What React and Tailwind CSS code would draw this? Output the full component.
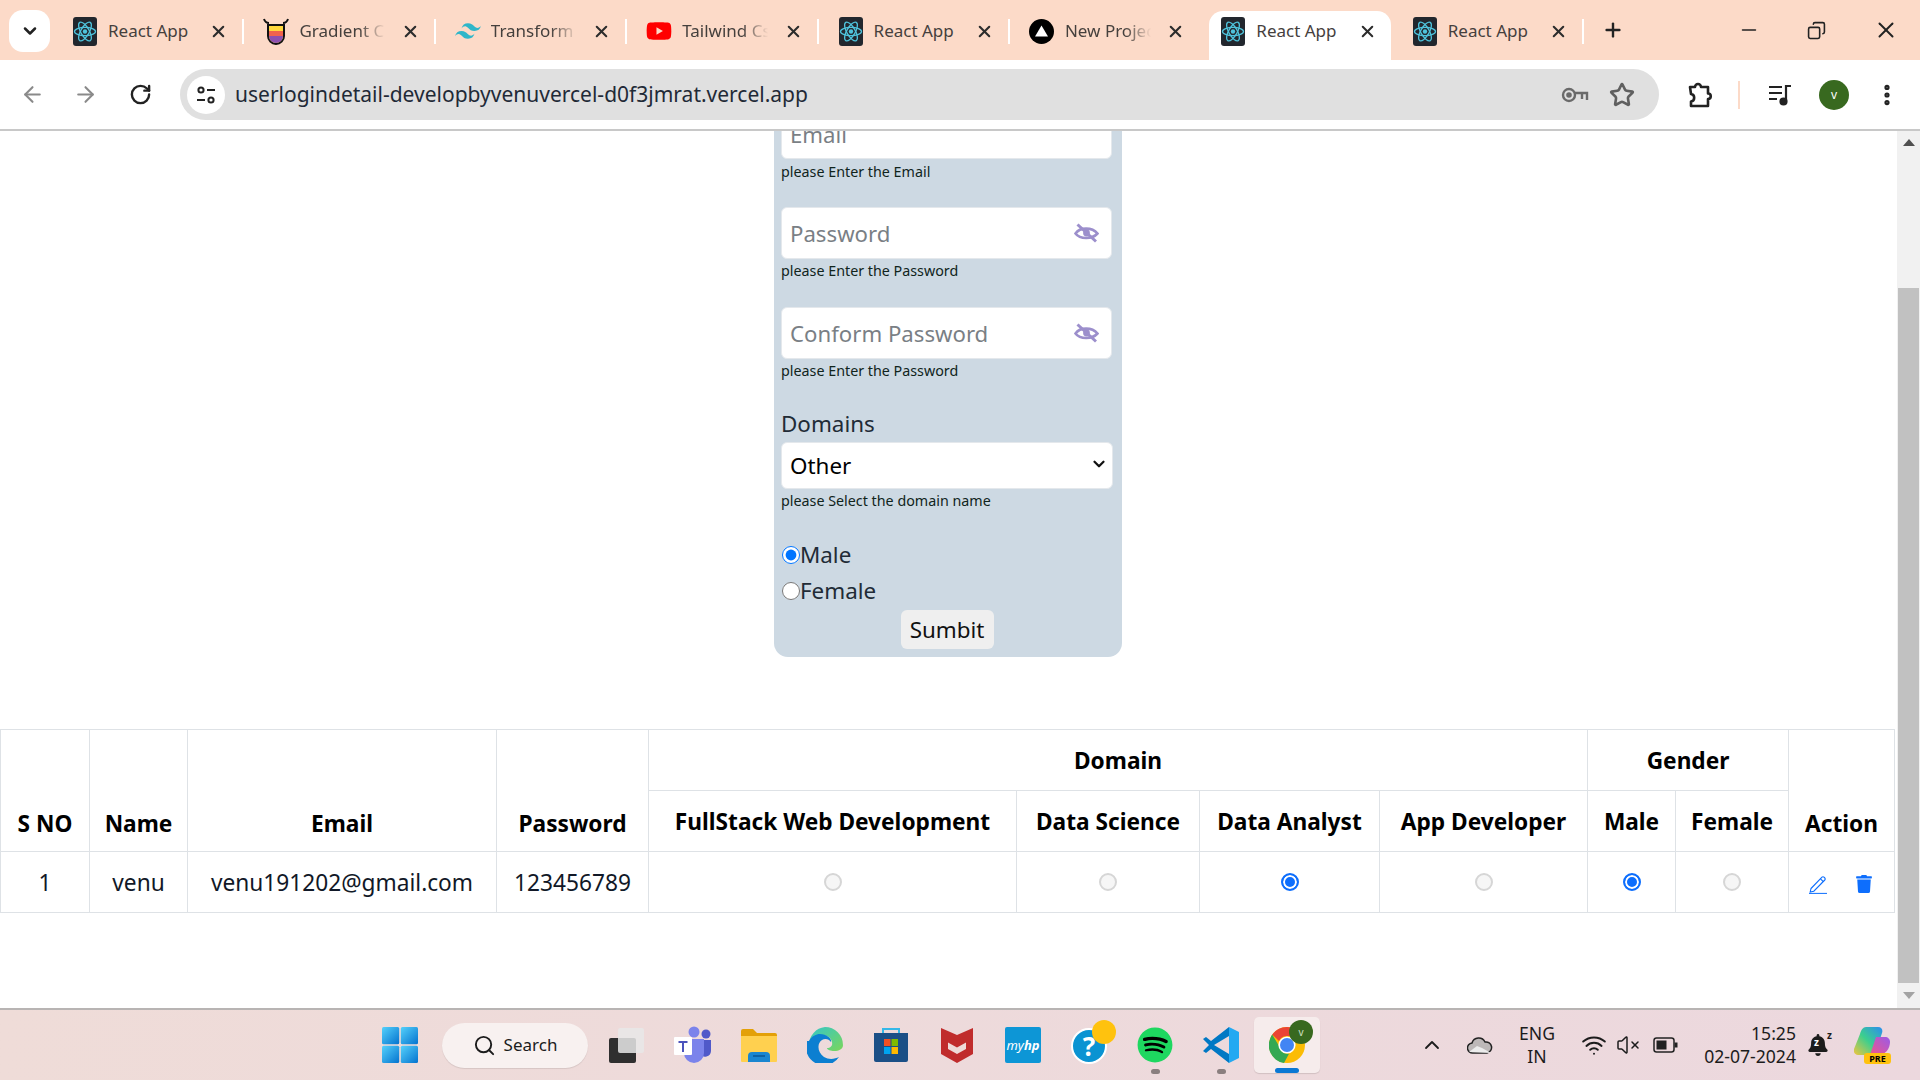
import React from "react";
import {
  ArrowLeft,
  ArrowRight,
  RotateCw,
  ChevronDown,
  ChevronUp,
  X,
  Plus,
  Minus,
  Copy,
  Star,
  EllipsisVertical,
  Search,
  Wifi,
  VolumeX,
} from "lucide-react";
import { FaSpotify, FaTrash, FaYoutube, FaBell } from "react-icons/fa";
import { SiTailwindcss } from "react-icons/si";

const FONT = "font-['Noto_Sans','Open_Sans',sans-serif]";

const ReactLogo = () => (
  <svg width="24" height="29" viewBox="0 0 24 29">
    <rect width="24" height="29" rx="3" fill="#22272e" />
    <g fill="none" stroke="#4fc3dc" strokeWidth="1.3">
      <ellipse cx="12" cy="14.5" rx="10.5" ry="4.2" />
      <ellipse cx="12" cy="14.5" rx="10.5" ry="4.2" transform="rotate(60 12 14.5)" />
      <ellipse cx="12" cy="14.5" rx="10.5" ry="4.2" transform="rotate(120 12 14.5)" />
    </g>
    <circle cx="12" cy="14.5" r="2.2" fill="#4fc3dc" />
  </svg>
);

const GradientLogo = () => (
  <svg width="26" height="30" viewBox="0 0 26 30">
    <path d="M5 9h16v11a8 8 0 0 1-16 0z" fill="#ffd83d" stroke="#111" strokeWidth="2" />
    <path d="M6 15h14v5H6z" fill="#f0624d" />
    <path d="M6 20h14a7 7 0 0 1-14 0z" fill="#8c4fb0" />
    <path d="M1 3c1 3 3 4 5 4M25 3c-1 3-3 4-5 4" stroke="#111" strokeWidth="2" fill="none" />
  </svg>
);

const VercelLogo = () => (
  <svg width="25" height="25" viewBox="0 0 25 25">
    <circle cx="12.5" cy="12.5" r="12.5" fill="#000" />
    <path d="M12.5 6.5l6.5 11H6z" fill="#fff" />
  </svg>
);

const YoutubeLogo = () => <FaYoutube className="text-[28px] text-[#f00]" />;
const TailwindLogo = () => <SiTailwindcss className="text-[26px] text-[#2fb6c9]" />;

const tabs = [
  { title: "React App", logo: <ReactLogo /> },
  { title: "Gradient Colors", logo: <GradientLogo />, fade: true },
  { title: "Transform - Tailwind", logo: <TailwindLogo />, fade: true },
  { title: "Tailwind Css", logo: <YoutubeLogo />, fade: true },
  { title: "React App", logo: <ReactLogo /> },
  { title: "New Project", logo: <VercelLogo />, fade: true },
  { title: "React App", logo: <ReactLogo />, active: true },
  { title: "React App", logo: <ReactLogo /> },
];

const Tab = ({ title, logo, fade, active, noSep }) => (
  <div className="relative flex items-center w-[191.4px] h-[49px] mt-[11px] pl-[13px] pr-[22px] pb-[9px]">
    {active && <div className="absolute inset-y-0 left-[2px] right-[8px] bg-white rounded-t-[14px]" />}
    <div className="relative flex justify-center items-center w-[26px] shrink-0">{logo}</div>
    <div
      className={`relative ml-[10px] w-[88px] overflow-hidden whitespace-nowrap text-[17px] text-[#45403d] ${
        fade ? "[mask-image:linear-gradient(to_right,black_68%,transparent_98%)]" : ""
      }`}
    >
      {title}
    </div>
    <X size={19} strokeWidth={2.6} className="relative ml-auto text-[#2c2c2c]" />
    {!active && !noSep && <div className="absolute right-[6px] top-[8px] w-[2px] h-[25px] bg-white" />}
  </div>
);

const TabStrip = () => (
  <div className="flex h-[60px] bg-[#fcdac8] pl-[9px]">
    <div className="flex items-center justify-center w-[41px] h-[42px] mt-[10px] bg-white rounded-[14px]">
      <ChevronDown size={20} strokeWidth={3} className="text-[#222]" />
    </div>
    <div className="flex ml-[9px]">
      {tabs.map((t, i) => (
        <Tab key={i} {...t} noSep={i === 5} />
      ))}
    </div>
    <div className="flex items-center ml-[12px]">
      <Plus size={22} strokeWidth={2.6} className="text-[#222]" />
    </div>
    <div className="flex items-center ml-auto text-[#222]">
      <div className="w-[62px] flex justify-center"><Minus size={22} strokeWidth={1.8} /></div>
      <div className="w-[72px] flex justify-center"><Copy size={19} strokeWidth={2} className="-scale-x-100" /></div>
      <div className="w-[68px] flex justify-center"><X size={26} strokeWidth={1.8} /></div>
    </div>
  </div>
);

const KeyIcon = () => (
  <svg width="28" height="18" viewBox="0 0 28 18" fill="none" stroke="#6a6a6a" strokeWidth="2.4">
    <circle cx="8" cy="9" r="6" />
    <circle cx="8" cy="9" r="1.6" fill="#6a6a6a" />
    <path d="M14 7h12v7M21 8v5" />
  </svg>
);

const MediaIcon = () => (
  <svg width="24" height="22" viewBox="0 0 24 22" fill="none" stroke="#222" strokeWidth="2.2">
    <path d="M1 3h13M1 9h13M1 15h8" />
    <path d="M18 17V2h5" />
    <circle cx="15.5" cy="17.5" r="3" fill="#222" />
  </svg>
);

const SiteIcon = () => (
  <svg width="20" height="20" viewBox="0 0 20 20" fill="none" stroke="#222" strokeWidth="2">
    <circle cx="5" cy="5" r="2.6" />
    <path d="M11 5h8M1 15h8" />
    <circle cx="15" cy="15" r="2.6" />
  </svg>
);

const PuzzleIcon = () => (
  <svg width="28" height="28" viewBox="0 0 28 28" fill="none" stroke="#222" strokeWidth="2.6" strokeLinejoin="round">
    <path d="M4 6h5a3 3 0 0 1 6 0h7v6.5a2.6 2.6 0 0 1 0 5.5v7H5v-4.5a3.8 3.8 0 0 0 0-7.5z" />
  </svg>
);

const EyeOff = () => (
  <svg width="25" height="20" viewBox="0 0 25 20" fill="none" stroke="#9c8fcc" strokeWidth="2.6" className="ml-auto">
    <path d="M1.5 10.5C6 4 18 4 23.5 10.5C18 16.5 6 16.5 1.5 10.5z" />
    <circle cx="12.5" cy="10" r="3.4" fill="#9c8fcc" stroke="none" />
    <path d="M3.5 1.5 22 18.5" strokeWidth="3" />
  </svg>
);

const Toolbar = () => (
  <div className="flex items-center h-[71px] bg-white border-b-2 border-[#c8c8c8]">
    <div className="flex w-[180px] pl-[20px] items-center">
      <ArrowLeft size={25} strokeWidth={2} className="text-[#8a8a8a]" />
      <ArrowRight size={25} strokeWidth={2} className="text-[#8a8a8a] ml-[28px]" />
      <RotateCw size={23} strokeWidth={2.5} className="text-[#222] ml-[31px]" />
    </div>
    <div className="flex items-center w-[1479px] h-[51px] bg-[#e0e0e0] rounded-full pl-[7px] pr-[24px]">
      <div className="flex items-center justify-center w-[38px] h-[38px] bg-white rounded-full">
        <SiteIcon />
      </div>
      <span className="ml-[10px] text-[21px] text-[#1f2a37]">userlogindetail-developbyvenuvercel-d0f3jmrat.vercel.app</span>
      <div className="ml-auto flex items-center gap-[20px]">
        <KeyIcon />
        <Star size={26} strokeWidth={2.4} className="text-[#5f5f5f]" />
      </div>
    </div>
    <div className="flex items-center ml-[27px]">
      <PuzzleIcon />
      <div className="w-[2px] h-[28px] bg-[#fcdac8] ml-[24px]" />
      <div className="ml-[28px]"><MediaIcon /></div>
      <div className="flex items-center justify-center w-[30px] h-[30px] ml-[27px] rounded-full bg-[#38691f] text-white text-[12px]">v</div>
      <EllipsisVertical size={26} strokeWidth={2.8} className="text-[#222] ml-[25px]" />
    </div>
  </div>
);

const Help = ({ children }) => (
  <p className="mt-[2px] text-[14.3px] leading-[20px] text-[#10241c]">{children}</p>
);

const PasswordField = ({ placeholder }) => (
  <div className="flex items-center h-[52px] w-[331px] bg-white rounded-[6px] border border-[#e4e8ec] pl-[8px] pr-[12px]">
    <span className="pt-[1px] text-[22.2px] text-[#7a7f85]">{placeholder}</span>
    <EyeOff />
  </div>
);

const RegisterForm = () => (
  <div className="w-[348px] h-[526px] overflow-hidden bg-[#cdd9e3] rounded-b-[14px] pl-[7px] pr-[9px]">
    <div className="-mt-[24px]">
      <div className="flex items-center h-[52px] w-[331px] bg-white rounded-[6px] border border-[#e4e8ec] pl-[8px]">
        <span className="pt-[3px] text-[22.2px] text-[#7a7f85]">Email</span>
      </div>
      <div className="pt-[1px]">
        <Help>please Enter the Email</Help>
      </div>
      <div className="mt-[25px]">
        <PasswordField placeholder="Password" />
      </div>
      <Help>please Enter the Password</Help>
      <div className="mt-[26px]">
        <PasswordField placeholder="Conform Password" />
      </div>
      <Help>please Enter the Password</Help>
      <p className="mt-[25px] text-[22.4px] leading-[36px] text-[#212b36]">Domains</p>
      <div className="relative w-[332px]">
        <select
          defaultValue="Other"
          className="block appearance-none w-full h-[47px] bg-white rounded-[6px] border border-[#e4e8ec] pl-[8px] text-[22.4px] text-black"
        >
          <option>Other</option>
        </select>
        <ChevronDown size={18} strokeWidth={3} className="absolute right-[5px] top-[13px] text-[#111]" />
      </div>
      <Help>please Select the domain name</Help>
      <label className="flex items-center mt-[26px] h-[36px] text-[22.4px] text-[#212b36]">
        <input type="radio" name="gender" defaultChecked className="ml-[1px] w-[18px] h-[18px] accent-[#0075ff]" />
        <span>Male</span>
      </label>
      <label className="flex items-center h-[36px] text-[22.4px] text-[#212b36]">
        <input type="radio" name="gender" className="ml-[1px] w-[18px] h-[18px]" />
        <span>Female</span>
      </label>
      <div className="flex justify-center mt-[1px]">
        <button className="w-[93px] h-[39px] bg-[#efefef] rounded-[6px] text-[22.4px] text-[#111]">Sumbit</button>
      </div>
    </div>
  </div>
);

const TableRadio = ({ checked }) => (
  <input
    type="radio"
    readOnly
    checked={!!checked}
    className="inline-block align-middle -mt-[3px] appearance-none w-[18px] h-[18px] rounded-full border-2 border-[#d6d6d6] bg-[#f6f6f6] checked:border-[#0d6efd] checked:bg-[#0d6efd] checked:shadow-[inset_0_0_0_2px_white]"
  />
);

const th = "border border-[#dee2e6] px-2 text-center font-bold text-[22.7px] text-black";
const td = "border border-[#dee2e6] px-2 text-center text-[22.7px] text-[#111827]";

const EditIcon = () => (
  <svg width="20" height="20" viewBox="0 0 20 20" fill="none" stroke="#0d6efd" strokeWidth="1.1">
    <path d="M3 14.5 14 3.2a1.4 1.4 0 0 1 2 0l.8.8a1.4 1.4 0 0 1 0 2L5.8 17.2l-3.6.8z" />
    <path d="M12.5 4.8l2.8 2.8" />
    <path d="M1 19.4h18" strokeWidth="1" />
  </svg>
);

const UserTable = () => (
  <table className="table-fixed border-collapse w-[1894px]">
    <colgroup>
      <col className="w-[89px]" />
      <col className="w-[98px]" />
      <col className="w-[309px]" />
      <col className="w-[152px]" />
      <col className="w-[368px]" />
      <col className="w-[183px]" />
      <col className="w-[180px]" />
      <col className="w-[208px]" />
      <col className="w-[88px]" />
      <col className="w-[113px]" />
      <col className="w-[106px]" />
    </colgroup>
    <thead>
      <tr className="h-[61px]">
        <th rowSpan={2} className={`${th} align-bottom pb-[10px]`}>S NO</th>
        <th rowSpan={2} className={`${th} align-bottom pb-[10px]`}>Name</th>
        <th rowSpan={2} className={`${th} align-bottom pb-[10px]`}>Email</th>
        <th rowSpan={2} className={`${th} align-bottom pb-[10px]`}>Password</th>
        <th colSpan={4} className={`${th} pt-[2px]`}>Domain</th>
        <th colSpan={2} className={`${th} pt-[2px]`}>Gender</th>
        <th rowSpan={2} className={`${th} align-bottom pb-[10px]`}>Action</th>
      </tr>
      <tr className="h-[61px]">
        <th className={`${th} pt-[3px]`}>FullStack Web Development</th>
        <th className={`${th} pt-[3px]`}>Data Science</th>
        <th className={`${th} pt-[3px]`}>Data Analyst</th>
        <th className={`${th} pt-[3px]`}>App Developer</th>
        <th className={`${th} pt-[3px]`}>Male</th>
        <th className={`${th} pt-[3px]`}>Female</th>
      </tr>
    </thead>
    <tbody>
      <tr className="h-[61px]">
        <td className={`${td} pt-[2px]`}>1</td>
        <td className={`${td} pt-[2px]`}>venu</td>
        <td className={`${td} pt-[2px]`}>venu191202@gmail.com</td>
        <td className={`${td} pt-[2px]`}>123456789</td>
        <td className={td}><TableRadio /></td>
        <td className={td}><TableRadio /></td>
        <td className={td}><TableRadio checked /></td>
        <td className={td}><TableRadio /></td>
        <td className={td}><TableRadio checked /></td>
        <td className={td}><TableRadio /></td>
        <td className={td}>
          <div className="flex items-center justify-center gap-[27px] pt-[4px] pr-[3px]">
            <EditIcon />
            <FaTrash className="text-[18px] text-[#0d6efd]" />
          </div>
        </td>
      </tr>
    </tbody>
  </table>
);

const Scrollbar = () => (
  <div className="flex flex-col w-[23px] bg-[#f1f1f1] items-center">
    <div className="h-[157px] w-full flex justify-center pt-[8px]">
      <div className="w-0 h-0 border-x-[6px] border-x-transparent border-b-[7px] border-b-[#505050]" />
    </div>
    <div className="w-[21px] h-[695px] bg-[#c1c1c1]" />
    <div className="flex-1 w-full flex justify-center items-center">
      <div className="w-0 h-0 border-x-[6px] border-x-transparent border-t-[7px] border-t-[#a3a3a3]" />
    </div>
  </div>
);

const WinLogo = () => (
  <svg width="36" height="36" viewBox="0 0 36 36">
    <defs>
      <linearGradient id="win" x1="0" y1="0" x2="1" y2="1">
        <stop offset="0" stopColor="#55d1fb" />
        <stop offset="1" stopColor="#0473cf" />
      </linearGradient>
    </defs>
    <rect x="0" y="0" width="17.2" height="17.2" rx="1.5" fill="url(#win)" />
    <rect x="18.8" y="0" width="17.2" height="17.2" rx="1.5" fill="url(#win)" />
    <rect x="0" y="18.8" width="17.2" height="17.2" rx="1.5" fill="url(#win)" />
    <rect x="18.8" y="18.8" width="17.2" height="17.2" rx="1.5" fill="url(#win)" />
  </svg>
);

const TaskView = () => (
  <svg width="36" height="36" viewBox="0 0 36 36">
    <rect x="0" y="11" width="27" height="25" rx="2" fill="#2f2f2f" />
    <rect x="9" y="1" width="26" height="25" rx="2" fill="#e8e8e8" fillOpacity="0.85" />
  </svg>
);

const Teams = () => (
  <svg width="38" height="38" viewBox="0 0 38 38">
    <circle cx="32" cy="8" r="4.5" fill="#5059c9" />
    <path d="M26 14h11v11a6 6 0 0 1-11 3z" fill="#5059c9" />
    <circle cx="20" cy="6" r="5.5" fill="#7b83eb" />
    <path d="M10 13h20v14a10 10 0 0 1-20 0z" fill="#7b83eb" />
    <rect x="0" y="11" width="18" height="18" rx="1" fill="#fff" />
    <path d="M4.5 15h9v2H10v9H8v-9H4.5z" fill="#4b53bc" />
  </svg>
);

const Folder = () => (
  <svg width="36" height="34" viewBox="0 0 36 34">
    <path d="M0 3a2 2 0 0 1 2-2h10l4 4h18a2 2 0 0 1 2 2v4H0z" fill="#e3a008" />
    <path d="M0 8h36v25a1 1 0 0 1-1 1H1a1 1 0 0 1-1-1z" fill="#ffd04f" />
    <path d="M7 34v-6a4 4 0 0 1 4-4h14a4 4 0 0 1 4 4v6z" fill="#1a86d0" />
    <path d="M12 28h12" stroke="#0b5a99" strokeWidth="1.6" />
  </svg>
);

const Edge = () => (
  <svg width="36" height="36" viewBox="0 0 36 36">
    <defs>
      <linearGradient id="edge" x1="0" y1="0" x2="1" y2="1">
        <stop offset="0" stopColor="#33c6c9" />
        <stop offset="1" stopColor="#7bd65a" />
      </linearGradient>
    </defs>
    <path d="M18 0a18 18 0 0 1 18 18c0 4-4 6-9 6-3 0-7-1-7-3 3 0 6-2 5-6-1-5-7-8-13-6-4 1-8 5-10 9A18 18 0 0 1 18 0z" fill="url(#edge)" />
    <path d="M2 14c3-5 7-7 11-7 7 0 12 5 11 8-2-3-6-4-9-2-5 3-5 12 2 17 5 3 11 2 15 0a18 18 0 0 1-32-16z" fill="#0c7fd1" />
  </svg>
);

const Store = () => (
  <svg width="34" height="36" viewBox="0 0 34 36">
    <path d="M9 6V2h16v4" fill="none" stroke="#35b8e8" strokeWidth="2" />
    <path d="M0 6h34v27a2 2 0 0 1-2 2H2a2 2 0 0 1-2-2z" fill="#1b4f86" />
    <rect x="10" y="12" width="6.5" height="7" fill="#f25022" />
    <rect x="17.5" y="12" width="6.5" height="7" fill="#7fba00" />
    <rect x="10" y="20" width="6.5" height="7" fill="#00a4ef" />
    <rect x="17.5" y="20" width="6.5" height="7" fill="#ffb900" />
  </svg>
);

const McAfee = () => (
  <svg width="32" height="36" viewBox="0 0 32 36">
    <path d="M0 1l16 7 16-7v26l-16 9-16-9z" fill="#c02c2c" />
    <path d="M7 11l9 4 9-4v11l-9 5-9-5z" fill="#eedbd8" />
    <path d="M7 9.5l9 4 9-4v6l-9 5-9-5z" fill="#c02c2c" />
  </svg>
);

const MyHp = () => (
  <div className="flex items-center justify-center w-[36px] h-[36px] rounded-[2px] bg-[#0d96d6] text-white text-[13px] italic leading-none">
    my<b>hp</b>
  </div>
);

const HelpBadge = () => (
  <div className="relative flex items-center justify-center w-[36px] h-[36px] mt-[2px] rounded-full bg-[#0a93d2] border-2 border-white text-white font-bold text-[26px] leading-none">
    ?
    <div className="absolute -top-[10px] -right-[11px] w-[24px] h-[24px] rounded-full bg-[#ffc20e]" />
  </div>
);

const VsCode = () => (
  <svg width="36" height="36" viewBox="0 0 36 36">
    <path d="M26 0l10 5v26l-10 5z" fill="#23a9f2" />
    <path d="M26 0v9L11 18l15 9v9L8 22l-5 4-3-2 6-6-6-6 3-2 5 4z" fill="#0078c4" />
  </svg>
);

const Chrome = () => (
  <div className="relative">
    <svg width="36" height="36" viewBox="0 0 36 36">
      <circle cx="18" cy="18" r="18" fill="#fbbc04" />
      <path d="M18 0a18 18 0 0 1 15.6 9H18a9 9 0 0 0-8 5L3.2 7.6A18 18 0 0 1 18 0z" fill="#ea4335" />
      <path d="M3.2 7.6 10 19a9 9 0 0 0 10 7.8L15 36A18 18 0 0 1 3.2 7.6z" fill="#34a853" />
      <circle cx="18" cy="18" r="8.6" fill="#fff" />
      <circle cx="18" cy="18" r="7" fill="#4285f4" />
    </svg>
    <div className="absolute -top-[7px] -right-[8px] flex items-center justify-center w-[24px] h-[24px] rounded-full bg-[#38691f] text-[#cfe0c5] text-[10px]">v</div>
  </div>
);

const Spotify = () => (
  <div className="relative w-[36px] h-[36px] flex items-center justify-center">
    <div className="absolute inset-[2px] rounded-full bg-black" />
    <FaSpotify className="relative text-[36px] text-[#1ed760]" />
  </div>
);

const Slot = ({ children, dot, active }) => (
  <div
    className={`relative flex items-center justify-center w-[66px] h-[56px] rounded-[5px] ${
      active ? "bg-[#f6ecec] shadow-[0_1px_1px_rgba(0,0,0,0.12)]" : ""
    }`}
  >
    {children}
    {dot && <div className="absolute bottom-[-1px] w-[9px] h-[5px] rounded-full bg-[#8a7f7f]" />}
    {active && <div className="absolute bottom-[0px] w-[24px] h-[5px] rounded-full bg-[#0a78d4]" />}
  </div>
);

const CloudIcon = () => (
  <svg width="26" height="18" viewBox="0 0 26 18" stroke="#222" strokeWidth="1.5">
    <path d="M6 17a5 5 0 0 1-1-10 7 7 0 0 1 13-1 5.5 5.5 0 0 1 2 11z" fill="#bdb8b8" />
    <path d="M2 16l8-6 5 2 9 5z" fill="#ececec" stroke="none" />
  </svg>
);

const BatteryIcon = () => (
  <svg width="25" height="16" viewBox="0 0 25 16" fill="none" stroke="#222" strokeWidth="1.5">
    <rect x="1" y="1" width="20" height="14" rx="2.5" />
    <rect x="3.5" y="3.5" width="10" height="9" fill="#222" stroke="none" />
    <path d="M23 5.5v5" strokeWidth="3" />
  </svg>
);

const SnoozeBell = () => (
  <div className="relative ml-[11px]">
    <FaBell className="text-[22px]" />
    <span className="absolute left-[7px] top-[3px] text-[10px] leading-none font-bold text-white">z</span>
    <span className="absolute -right-[3px] -top-[4px] text-[10px] leading-none font-bold">z</span>
  </div>
);

const Copilot = () => (
  <div className="relative w-[36px] h-[38px]">
    <svg width="36" height="30" viewBox="0 0 36 30">
      <defs>
        <linearGradient id="cop1" x1="0" y1="1" x2="1" y2="0">
          <stop offset="0" stopColor="#f2c53d" />
          <stop offset="0.5" stopColor="#3ccf8e" />
          <stop offset="1" stopColor="#2b8cf0" />
        </linearGradient>
        <linearGradient id="cop2" x1="0" y1="1" x2="1" y2="0">
          <stop offset="0" stopColor="#f0568a" />
          <stop offset="1" stopColor="#9a5be8" />
        </linearGradient>
      </defs>
      <path d="M12 1h12c4 0 5 3 4 6l-6 18c-1 3-3 4-6 4H4c-3 0-5-3-4-6l6-15c1-4 3-7 6-7z" fill="url(#cop1)" />
      <path d="M22 11h9c3 0 5 2 5 5 0 7-5 13-12 13h-8z" fill="url(#cop2)" />
    </svg>
    <div className="absolute bottom-0 right-[-1px] flex items-center justify-center w-[27px] h-[11px] rounded-[3px] bg-[#ffc20e] text-[9px] font-bold text-black leading-none">PRE</div>
  </div>
);

const Taskbar = () => (
  <div className="flex items-center h-[72px] border-t-2 border-[#b8b4b3] bg-gradient-to-r from-[#efdcd8] to-[#ecd8de] text-[#1c1c1c]">
    <div className="flex items-center pl-[382px]">
      <WinLogo />
    </div>
    <div className="flex items-center justify-center gap-[8px] w-[146px] h-[45px] ml-[24px] rounded-full bg-[#f8f1f0] shadow-[0_1px_1px_rgba(0,0,0,0.1)]">
      <Search size={23} strokeWidth={2} />
      <span className="text-[17px]">Search</span>
    </div>
    <div className="flex items-center ml-[6px]">
      <Slot><TaskView /></Slot>
      <Slot><Teams /></Slot>
      <Slot><Folder /></Slot>
      <Slot><Edge /></Slot>
      <Slot><Store /></Slot>
      <Slot><McAfee /></Slot>
      <Slot><MyHp /></Slot>
      <Slot><HelpBadge /></Slot>
      <Slot dot><Spotify /></Slot>
      <Slot dot><VsCode /></Slot>
      <Slot active><Chrome /></Slot>
    </div>
    <div className="flex items-center ml-[100px]">
      <ChevronUp size={24} strokeWidth={1.8} />
      <div className="ml-[23px]"><CloudIcon /></div>
      <div className="ml-[19px] w-[50px] text-center text-[17.6px] leading-[23px]">ENG<br />IN</div>
      <Wifi size={26} strokeWidth={1.8} className="ml-[19px]" />
      <VolumeX size={24} strokeWidth={1.5} className="ml-[9px]" />
      <div className="ml-[13px]"><BatteryIcon /></div>
      <div className="ml-[22px] w-[96px] text-right text-[17.6px] leading-[23px] whitespace-nowrap">15:25<br />02-07-2024</div>
      <SnoozeBell />
      <div className="ml-[25px]"><Copilot /></div>
    </div>
  </div>
);

export default function App() {
  return (
    <div className={`flex flex-col w-[1920px] h-[1080px] overflow-hidden bg-white ${FONT}`}>
      <TabStrip />
      <Toolbar />
      <div className="flex flex-1 min-h-0">
        <div className="flex-1 min-w-0">
          <div className="flex justify-center pr-[1px]">
            <RegisterForm />
          </div>
          <div className="mt-[72px]">
            <UserTable />
          </div>
        </div>
        <Scrollbar />
      </div>
      <Taskbar />
    </div>
  );
}
